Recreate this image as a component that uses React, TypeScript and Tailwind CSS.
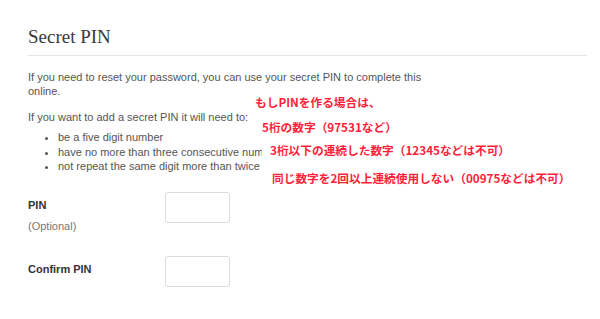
import React from "react";

const rules = [
  "be a five digit number",
  "have no more than three consecutive numbers",
  "not repeat the same digit more than twice",
];

const App = () => {
  return (
    <div className="relative h-[319px] w-[600px] overflow-hidden bg-white font-['Liberation_Sans',Arial,sans-serif]">
      <div className="ml-[28px] mr-[13px] pt-[26px]">
        <h2 className="pb-[7px] font-['Liberation_Serif',serif] text-[19px] leading-[22px] text-[#3a3a3a]">
          Secret PIN
        </h2>
        <div className="border-t border-[#e5e5e5]" />

        <p className="mt-[14px] w-[410px] text-[11px] leading-[14px] text-[#555]">
          If you need to reset your password, you can use your secret PIN to complete this
          online.
        </p>
        <p className="mt-[12px] text-[11px] leading-[14px] text-[#555]">
          If you want to add a secret PIN it will need to:
        </p>
        <ul className="mt-[6px] list-disc pl-[30px] text-[11px] leading-[14.5px] text-[#555]">
          {rules.map((r) => (
            <li key={r} className="whitespace-nowrap">
              {r}
            </li>
          ))}
        </ul>

        <div className="mt-[18px] flex">
          <div className="w-[137px] pt-[6px]">
            <div className="text-[11px] font-bold leading-[14px] text-[#333]">PIN</div>
            <div className="mt-[7px] text-[11px] leading-[14px] text-[#777]">(Optional)</div>
          </div>
          <input
            type="text"
            className="h-[31px] w-[65px] rounded-[3px] border border-[#dcdcdc] bg-white"
          />
        </div>

        <div className="mt-[23px] flex">
          <div className="w-[137px] pt-[6px]">
            <div className="text-[11px] font-bold leading-[14px] text-[#333]">Confirm PIN</div>
          </div>
          <input
            type="text"
            className="h-[31px] w-[65px] rounded-[3px] border border-[#dcdcdc] bg-white"
          />
        </div>
      </div>

      {/* annotation overlay */}
      <div className="absolute left-[255px] top-[96px] font-['Noto_Sans_CJK_JP',sans-serif] text-[11.7px] font-bold leading-[16px] text-[#ff1f3a]">
        <p className="leading-[12px]">もしPINを作る場合は、</p>
        <div className="ml-[7px] mt-[7px] w-[338px] bg-white pb-[6px] pt-[4px]">
          <p>5桁の数字（97531など）</p>
          <p className="ml-[8px] mt-[7px]">3桁以下の連続した数字（12345などは不可）</p>
          <p className="ml-[10px] mt-[12px]">同じ数字を2回以上連続使用しない（00975などは不可）</p>
        </div>
      </div>
    </div>
  );
};

export default App;
